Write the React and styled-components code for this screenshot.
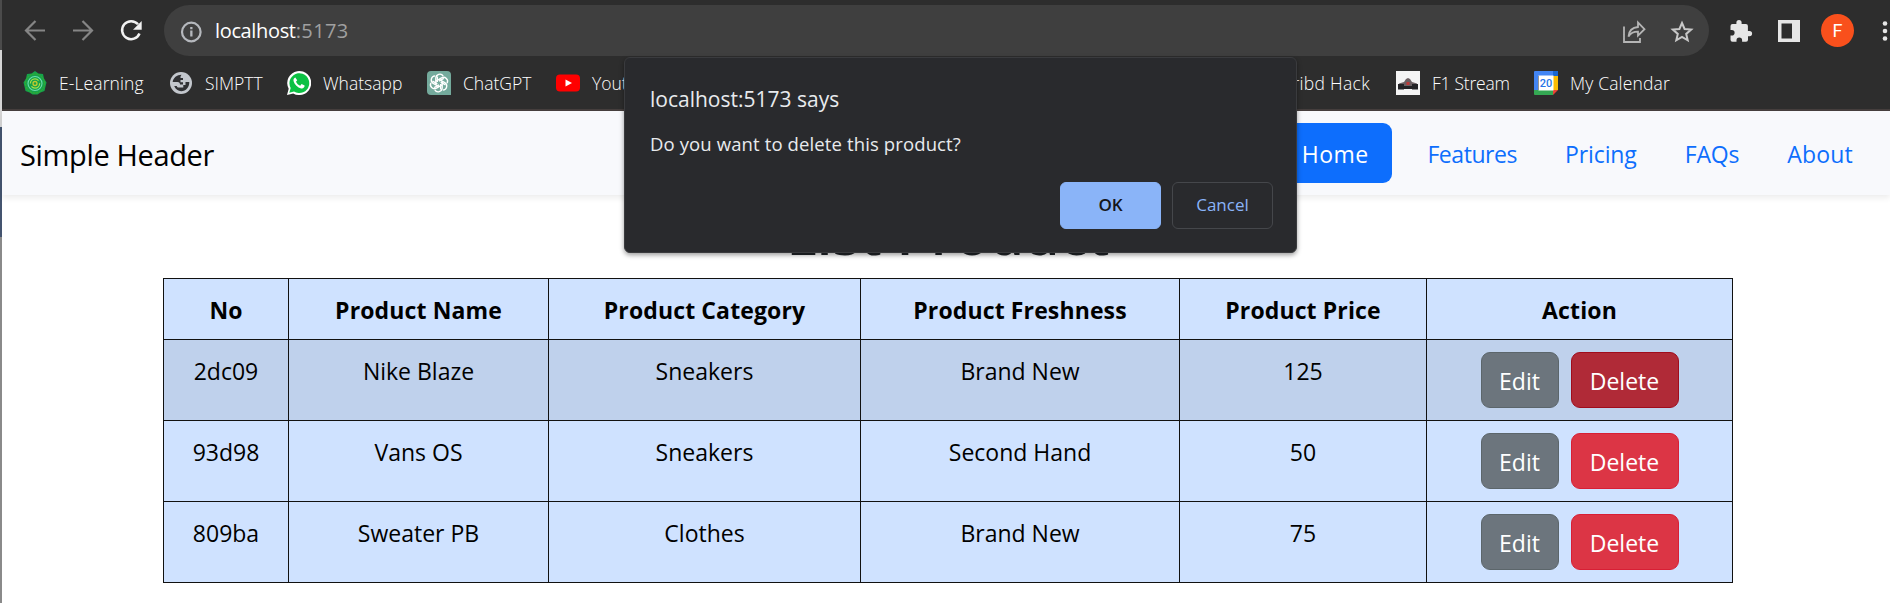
import React from "react";
import styled, { createGlobalStyle } from "styled-components";

const GlobalStyle = createGlobalStyle`
  *, *::before, *::after { box-sizing: border-box; }
  body {
    margin: 0;
    background: #fff;
    color: #000;
    font-family: "Open Sans", "Noto Sans", sans-serif;
    overflow: hidden;
  }
`;

const Window = styled.div`
  display: flex;
  height: 603px;
  overflow: hidden;
`;

const WindowEdge = styled.div`
  flex: 0 0 2px;
  background: linear-gradient(#4b4b4b 0 50px, #d6d6d6 50px 127px, #44546f 127px 237px, #8a8a8a 237px);
`;

const Main = styled.div`
  flex: 1;
  min-width: 0;
`;

const Chrome = styled.div`
  height: 111px;
  background: #2d2d2d;
  border-bottom: 2px solid #463f3e;
`;

const Toolbar = styled.div`
  display: flex;
  align-items: center;
  height: 61px;
  padding-left: 18px;
`;

const ToolIcon = styled.svg`
  flex: none;
  width: 30px;
  height: 30px;
  margin-right: ${(p) => p.$gap ?? 0}px;
`;

const MenuDots = styled.svg`
  flex: none;
  width: 6px;
  height: 30px;
`;

const AddressBar = styled.div`
  display: flex;
  align-items: center;
  flex: none;
  width: 1545px;
  height: 51px;
  margin-right: 17px;
  padding: 0 12px;
  border-radius: 26px;
  background: #3f3f3f;
`;

const Url = styled.span`
  flex: 1;
  margin-left: -1px;
  color: #fff;
  font-size: 20px;
  letter-spacing: -0.35px;
`;

const Port = styled.span`
  color: #a0a0a0;
  letter-spacing: 0.4px;
`;

const Avatar = styled.div`
  flex: none;
  width: 33px;
  height: 33px;
  margin-right: 28px;
  border-radius: 50%;
  background: #f9501c;
  color: #fff;
  font: 18px/33px Roboto, sans-serif;
  text-align: center;
`;

const BookmarkBar = styled.div`
  display: flex;
  align-items: center;
  height: 44px;
  padding-left: 21px;
`;

const Bookmark = styled.div`
  display: flex;
  align-items: center;
  flex: none;
  width: ${(p) => p.$width}px;
  color: #fff;
  font-size: 17.5px;
  font-weight: 300;
  letter-spacing: ${(p) => p.$track ?? 0}px;
  white-space: nowrap;
`;

const BookmarkIcon = styled.svg`
  flex: none;
  width: 24px;
  height: 24px;
  margin-right: 12px;
`;

const SiteHeader = styled.header`
  display: flex;
  align-items: center;
  justify-content: space-between;
  height: 84px;
  padding: 0 13px 0 18px;
  background: #f8f9fc;
  box-shadow: 0 3px 6px rgba(0, 0, 0, 0.075);
`;

const Brand = styled.span`
  padding-top: 2px;
  font-size: 29px;
  letter-spacing: -0.35px;
`;

const Nav = styled.nav`
  display: flex;
`;

const NavLink = styled.a`
  height: 60px;
  padding: 13px 24px 11px;
  margin-right: ${(p) => (p.$active ? 11 : 0)}px;
  border-radius: 9px;
  background: ${(p) => (p.$active ? "#0d6efd" : "transparent")};
  color: ${(p) => (p.$active ? "#fff" : "#0d6efd")};
  font-size: 23px;
  line-height: 36px;
  letter-spacing: ${(p) => p.$track}px;
`;

const Content = styled.main`
  padding-left: 161px;
`;

const Title = styled.h1`
  width: 1570px;
  height: 83px;
  margin: 0;
  padding-top: 2px;
  font-size: 56px;
  font-weight: 600;
  line-height: 72px;
  color: #212529;
  text-align: center;
`;

const Table = styled.table`
  width: 1570px;
  table-layout: fixed;
  border-collapse: separate;
  border-spacing: 0;
  border: solid #111;
  border-width: 1px 0 0 1px;
  font-size: 23px;
  line-height: 36px;
  text-align: center;
`;

const Column = styled.col`
  width: ${(p) => p.$width}px;
`;

const HeadCell = styled.th`
  height: 61px;
  padding: 13px 0 11px;
  border: solid #111;
  border-width: 0 1px 1px 0;
  background: #cfe2ff;
  font-weight: 700;
  letter-spacing: 0.12px;
`;

const Row = styled.tr`
  background: ${(p) => (p.$active ? "#bfd1ec" : "#cfe2ff")};
`;

const Cell = styled.td`
  height: 81px;
  padding: 13px 0 11px;
  border: solid #111;
  border-width: 0 1px 1px 0;
  vertical-align: top;
`;

const Actions = styled.div`
  display: flex;
  justify-content: center;
  gap: 12px;
  height: 56px;
  margin-top: -1px;
`;

const colors = {
  edit: ["#6c757d", "#5c666b"],
  delete: ["#dc3545", "#d81f35"],
  pressed: ["#b02a37", "#a00c1c"],
};

const ActionButton = styled.button`
  width: ${(p) => p.$width}px;
  height: 56px;
  padding: 2px 0 0;
  border: 1px solid ${(p) => colors[p.$tone][1]};
  border-radius: 9px;
  background: ${(p) => colors[p.$tone][0]};
  color: #fff;
  font: 23px/36px "Open Sans", sans-serif;
`;

const Dialog = styled.div`
  position: absolute;
  left: 624px;
  top: 57px;
  display: flex;
  flex-direction: column;
  width: 673px;
  height: 196px;
  padding: 24px 23px 23px 25px;
  border: 1px solid #3a3b3e;
  border-radius: 6px;
  background: #292a2d;
  box-shadow: 0 2px 5px rgba(0, 0, 0, 0.4);
  color: #e8eaed;
`;

const DialogTitle = styled.div`
  font-size: 21px;
  line-height: 34px;
`;

const DialogMessage = styled.div`
  margin-top: 13px;
  font-size: 18.5px;
  letter-spacing: 0.12px;
  line-height: 30px;
`;

const DialogButtons = styled.div`
  display: flex;
  justify-content: flex-end;
  gap: 11px;
  margin-top: auto;
`;

const DialogButton = styled.button`
  width: 101px;
  height: 47px;
  padding: 0 0 2px;
  border: 1px solid ${(p) => (p.$primary ? "#8ab4f8" : "#45474b")};
  border-radius: 6px;
  background: ${(p) => (p.$primary ? "#8ab4f8" : "transparent")};
  color: ${(p) => (p.$primary ? "#151619" : "#8ab4f8")};
  font: ${(p) => (p.$primary ? 600 : 400)} 17px "Open Sans", sans-serif;
`;

const ELearningIcon = () => (
  <BookmarkIcon viewBox="0 0 24 24">
    <path d="M12 0l3.500 2.500 4.500.5 1 4.500 2.500 4-1 4-1 4.500-4 1.500-3 2h-5l-3-2-4-1.500-1-4.500-1-4 2.500-4L4 3l4.500-.5z" fill="#16a34a" />
    <g fill="none">
      <circle cx="12" cy="12.500" r="9.500" stroke="#3fae2a" strokeWidth="1" strokeDasharray="2 1" />
      <circle cx="12" cy="12.500" r="7" stroke="#6fdcae" strokeWidth="1.100" />
      <circle cx="12" cy="12.500" r="4.600" stroke="#a8e04a" strokeWidth="1.200" strokeDasharray="11 3" />
      <circle cx="12" cy="12.500" r="2" stroke="#c6c92c" strokeWidth="1.300" />
    </g>
  </BookmarkIcon>
);

const GlobeIcon = () => (
  <BookmarkIcon viewBox="0 0 24 24">
    <circle cx="12" cy="12" r="11" fill="#c3c7cd" />
    <path d="M12.500 3.800C8 3.800 4 7 3.700 11h4.800c1.800 0 2.500 1 2.500 2.500h3v-2.200h-2.500V9H14V7h-2.500V5.500z" fill="#303134" />
    <path d="M20.300 11h-3.800v3h-2.200v2.500h-4.500c-1 0-1.800-.5-2-1.500H5.200c1.300 3.300 4 5.200 7 5.200 4.700 0 8.100-4 8.100-9.200z" fill="#303134" />
  </BookmarkIcon>
);

const WhatsappIcon = () => (
  <BookmarkIcon viewBox="0 0 24 24">
    <path d="M0 24l1.700-6.200A12 12 0 1 1 6.200 22.400z" fill="#fff" />
    <path d="M2.300 21.700l1.400-4.700A9.900 9.900 0 1 1 7 20.500z" fill="#0bc143" />
    <path d="M8.300 6.500c-1 .2-2.300 1.700-1.700 3.700 1 3.400 4 6.300 7.500 7.200 2 .4 3.600-.9 3.500-2.800l-3-1.500-1.400 1.600c-2-.8-3.300-2.100-4.200-4l1.200-1.400z" fill="#fff" />
  </BookmarkIcon>
);

const ChatGptIcon = () => (
  <BookmarkIcon viewBox="0 0 24 24">
    <path d="M4 0h16a4 4 0 0 1 4 4v20H4a4 4 0 0 1-4-4V4a4 4 0 0 1 4-4z" fill="#74aa9c" />
    <g fill="none" stroke="#fff" strokeWidth="1.350">
      {[0, 60, 120, 180, 240, 300].map((a) => (
        <path key={a} transform={`rotate(${a} 12 12)`} d="M8.800 13.800V7.200a4 4 0 0 1 7.400-2.100M12 10.100l4.800-2.800" />
      ))}
    </g>
  </BookmarkIcon>
);

const YoutubeIcon = () => (
  <BookmarkIcon viewBox="0 0 24 24">
    <rect y="3.500" width="24" height="17" rx="4" fill="#f00" />
    <path d="M9.500 8.500l6.500 3.500-6.500 3.500z" fill="#fff" />
  </BookmarkIcon>
);

const RaceIcon = () => (
  <BookmarkIcon viewBox="0 0 24 24">
    <path fill="#f4f4f4" d="M0 0h24v24H0z" />
    <path d="M3 12.500l5-1.500 2-3 2-1 2 1 2 3 5 1.500V17H3z" fill="#6b6063" />
    <path d="M2 13h6v5.500H2zM16 13h6v5.500h-6zM7 15h10v3H7z" fill="#232326" />
    <path d="M10.500 11h3v3h-3z" fill="#bd3939" />
  </BookmarkIcon>
);

const CalendarText = styled.text`
  font: 500 11px Roboto, sans-serif;
  letter-spacing: 0;
`;

const CalendarIcon = () => (
  <BookmarkIcon viewBox="0 0 24 24">
    <path fill="#4285f4" d="M1 0h22a1 1 0 0 1 1 1v4H0V1a1 1 0 0 1 1-1z" />
    <path fill="#4285f4" d="M0 4h4v16H0z" />
    <path fill="#fbbc04" d="M19 5h5v14h-5z" />
    <path fill="#1967d2" d="M19 0h4a1 1 0 0 1 1 1v4h-5z" />
    <path fill="#34a853" d="M0 19h19v5H1a1 1 0 0 1-1-1z" />
    <path fill="#ea4335" d="M19 19h5l-5 5z" />
    <path fill="#fff" d="M4.500 4.500h15v15h-15z" />
    <CalendarText x="12" y="16" textAnchor="middle" fill="#2875e8">20</CalendarText>
  </BookmarkIcon>
);

const products = [
  { no: "2dc09", name: "Nike Blaze", category: "Sneakers", freshness: "Brand New", price: 125, active: true },
  { no: "93d98", name: "Vans OS", category: "Sneakers", freshness: "Second Hand", price: 50 },
  { no: "809ba", name: "Sweater PB", category: "Clothes", freshness: "Brand New", price: 75 },
];

const BrowserChrome = () => (
  <Chrome>
    <Toolbar>
      <ToolIcon $gap={18} viewBox="0 0 30 30" fill="none" stroke="#858585" strokeWidth="2.200">
        <path d="M25 14.500H6M15.500 5L6 14.500l9.500 9.500" />
      </ToolIcon>
      <ToolIcon $gap={18} viewBox="0 0 30 30" fill="none" stroke="#858585" strokeWidth="2.200">
        <path d="M5 14.500h19M14.500 5l9.500 9.500-9.500 9.500" />
      </ToolIcon>
      <ToolIcon $gap={18} viewBox="0 0 30 30">
        <path d="M22 8.300A9 9 0 1 0 23.500 17.500" fill="none" stroke="#f1f1f1" strokeWidth="2.500" />
        <path d="M25.700 5v8.700H17z" fill="#f1f1f1" />
      </ToolIcon>
      <AddressBar>
        <ToolIcon $gap={10} viewBox="0 0 30 30">
          <circle cx="15.300" cy="16" r="9.300" fill="none" stroke="#b5b8bd" strokeWidth="2.200" />
          <path d="M14.200 14.500h2.300v6h-2.300zM14.200 11h2.300v2.200h-2.300z" fill="#b5b8bd" />
        </ToolIcon>
        <Url>localhost<Port>:5173</Port></Url>
        <ToolIcon $gap={18} viewBox="0 0 30 30" fill="none" stroke="#b5b5b5" strokeWidth="1.800">
          <path d="M5 10.500v15.500h16v-4M9.500 20.500c.5-6 3.500-9 9.500-9.500V6.500l6.500 6.700-6.500 6.500v-4c-4.500 0-7.500 1.500-9.500 4.800z" />
        </ToolIcon>
        <ToolIcon $gap={0} viewBox="0 0 30 30" fill="none" stroke="#c8c8c8" strokeWidth="2">
          <path d="M15 7l2.600 6 6.600.6-5 4.300 1.500 6.400L15 20.900l-5.700 3.400 1.500-6.400-5-4.300 6.600-.6z" />
        </ToolIcon>
      </AddressBar>
      <ToolIcon $gap={18} viewBox="0 0 30 30">
        <path
          d="M23.500 15h-1.600v-5a2 2 0 0 0-2-2h-4.300V6.500a2.600 2.600 0 0 0-5.200 0V8H6.500a2 2 0 0 0-2 2v4h1.300a2.800 2.800 0 0 1 0 5.600H4.500v4.100a2 2 0 0 0 2 2h4v-1.500a2.800 2.800 0 0 1 5.600 0v1.500h3.900a2 2 0 0 0 2-2v-3.500h1.500a2.600 2.600 0 0 0 0-5.200z"
          fill="#e6e6e6"
        />
      </ToolIcon>
      <ToolIcon $gap={17} viewBox="0 0 30 30">
        <path d="M4 4h22v22H4zM7.500 7.500v15H18v-15z" fill="#e6e6e6" fillRule="evenodd" />
      </ToolIcon>
      <Avatar>F</Avatar>
      <MenuDots viewBox="0 0 6 30" fill="#e6e6e6">
        <circle cx="3" cy="7.500" r="2.300" />
        <circle cx="3" cy="15" r="2.300" />
        <circle cx="3" cy="22.500" r="2.300" />
      </MenuDots>
    </Toolbar>
    <BookmarkBar>
      <Bookmark $width={146} $track={0.1}><ELearningIcon />E-Learning</Bookmark>
      <Bookmark $width={118}><GlobeIcon />SIMPTT</Bookmark>
      <Bookmark $width={140}><WhatsappIcon />Whatsapp</Bookmark>
      <Bookmark $width={129}><ChatGptIcon />ChatGPT</Bookmark>
      <Bookmark $width={718}><YoutubeIcon />Youtube</Bookmark>
      <Bookmark $width={122} $track={0.3}>Scribd Hack</Bookmark>
      <Bookmark $width={138} $track={-0.25}><RaceIcon />F1 Stream</Bookmark>
      <Bookmark $width={150} $track={0.15}><CalendarIcon />My Calendar</Bookmark>
    </BookmarkBar>
  </Chrome>
);

const App = () => (
  <>
    <GlobalStyle />
    <Window>
      <WindowEdge />
      <Main>
        <BrowserChrome />
        <SiteHeader>
          <Brand>Simple Header</Brand>
          <Nav>
            <NavLink $active $track={0.4}>Home</NavLink>
            <NavLink $track={-0.45}>Features</NavLink>
            <NavLink $track={-0.1}>Pricing</NavLink>
            <NavLink $track={-0.2}>FAQs</NavLink>
            <NavLink $track={0.2}>About</NavLink>
          </Nav>
        </SiteHeader>
        <Content>
          <Title>List Product</Title>
          <Table>
            <colgroup>
              {[125, 260, 312, 319, 247, 306].map((w, i) => <Column key={i} $width={w} />)}
            </colgroup>
            <thead>
              <tr>
                {["No", "Product Name", "Product Category", "Product Freshness", "Product Price", "Action"].map((h) => (
                  <HeadCell key={h}>{h}</HeadCell>
                ))}
              </tr>
            </thead>
            <tbody>
              {products.map((p) => (
                <Row key={p.no} $active={p.active}>
                  <Cell>{p.no}</Cell>
                  <Cell>{p.name}</Cell>
                  <Cell>{p.category}</Cell>
                  <Cell>{p.freshness}</Cell>
                  <Cell>{p.price}</Cell>
                  <Cell>
                    <Actions>
                      <ActionButton $tone="edit" $width={78}>Edit</ActionButton>
                      <ActionButton $tone={p.active ? "pressed" : "delete"} $width={108}>Delete</ActionButton>
                    </Actions>
                  </Cell>
                </Row>
              ))}
            </tbody>
          </Table>
        </Content>
      </Main>
    </Window>
    <Dialog role="dialog">
      <DialogTitle>localhost:5173 says</DialogTitle>
      <DialogMessage>Do you want to delete this product?</DialogMessage>
      <DialogButtons>
        <DialogButton $primary>OK</DialogButton>
        <DialogButton>Cancel</DialogButton>
      </DialogButtons>
    </Dialog>
  </>
);

export default App;
